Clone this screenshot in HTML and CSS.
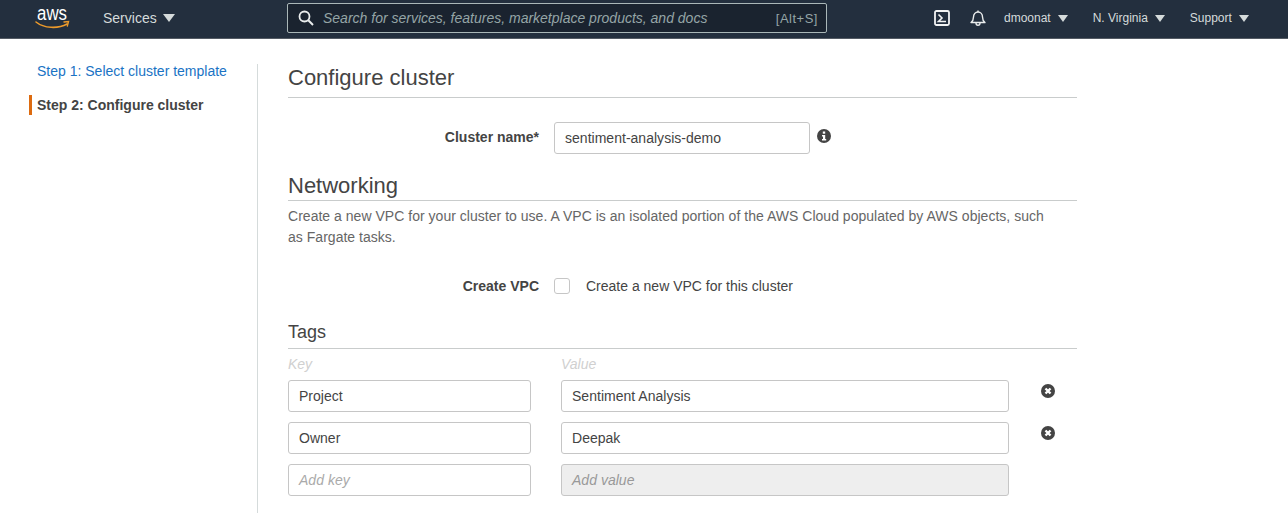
FILE: index.html
```html
<!DOCTYPE html>
<html lang="en">
<head>
<meta charset="utf-8">
<title>Configure cluster</title>
<link rel="stylesheet" href="styles.css">
</head>
<body>
<header class="topbar">
  <svg class="logo" width="42" height="28" viewBox="0 0 42 28">
    <text class="logo-text" x="2" y="16" textLength="30" lengthAdjust="spacingAndGlyphs">aws</text>
    <path d="M1 18C9 24.500 23 25 32 20" fill="none" stroke="#ec9a2b" stroke-width="1.600" stroke-linecap="round"/>
    <path d="M29 18L33.500 17.600L32.300 22" fill="none" stroke="#ec9a2b" stroke-width="1.400" stroke-linecap="round"/>
  </svg>
  <div class="nav-item services">Services <span class="caret caret-lg"></span></div>
  <div class="search">
    <svg width="16" height="16" viewBox="0 0 16 16"><circle cx="6.500" cy="6.500" r="5" fill="none" stroke="#eaeded" stroke-width="1.800"/><path d="M10.300 10.300L15 15" stroke="#eaeded" stroke-width="2"/></svg>
    <span class="search-text">Search for services, features, marketplace products, and docs</span>
    <span class="search-key">[Alt+S]</span>
  </div>
  <div class="right">
    <svg class="cloudshell" width="16" height="16" viewBox="0 0 16 16"><rect x="1" y="1" width="14" height="14" rx="1.500" fill="none" stroke="#f2f3f3" stroke-width="1.800"/><path d="M4.500 4.500L8 8L4.500 11.500H12" fill="none" stroke="#f2f3f3" stroke-width="1.600"/></svg>
    <svg class="bell" width="16" height="16" viewBox="0 0 16 16"><path d="M1 12.500C3 11 3.500 9.500 3.500 7C3.500 4 5.500 2 8 2C10.500 2 12.500 4 12.500 7C12.500 9.500 13 11 15 12.500Z" fill="none" stroke="#eaeded" stroke-width="1.400" stroke-linejoin="round"/><path d="M6 13C6 16 10 16 10 13" fill="none" stroke="#eaeded" stroke-width="1.400"/><path d="M8 0.500V2" stroke="#eaeded" stroke-width="1.400"/></svg>
    <div class="nav-item small user">dmoonat <span class="caret"></span></div>
    <div class="nav-item small region">N. Virginia <span class="caret"></span></div>
    <div class="nav-item small support">Support <span class="caret"></span></div>
  </div>
</header>
<div class="page">
  <nav class="side">
    <a class="step-link">Step 1: Select cluster template</a>
    <div class="step-current">Step 2: Configure cluster</div>
  </nav>
  <main class="main">
    <h1 class="title">Configure cluster</h1>
    <div class="name-row">
      <label class="label">Cluster name*</label>
      <div class="input name-input">sentiment-analysis-demo</div>
      <svg class="info" width="14" height="14" viewBox="0 0 14 14"><circle cx="7" cy="7" r="7" fill="#444"/><rect x="5.800" y="2.500" width="2.400" height="2.200" fill="#fff"/><path d="M5 6H8.200V10H9.200V11.500H5V10H6V7.500H5Z" fill="#fff"/></svg>
    </div>
    <h2 class="section net-title">Networking</h2>
    <p class="desc">Create a new VPC for your cluster to use. A VPC is an isolated portion of the AWS Cloud populated by AWS objects, such as Fargate tasks.</p>
    <div class="vpc-row">
      <label class="label">Create VPC</label>
      <span class="checkbox"></span>
      <span class="check-text">Create a new VPC for this cluster</span>
    </div>
    <h2 class="section-sm">Tags</h2>
    <div class="tags">
      <div class="col-head">Key</div>
      <div class="col-head">Value</div>
      <div></div>
      <div class="input">Project</div>
      <div class="input">Sentiment Analysis</div>
      <svg class="remove" width="14" height="14" viewBox="0 0 14 14"><circle cx="7" cy="7" r="7" fill="#444"/><path d="M4.500 4.500L9.500 9.500M9.500 4.500L4.500 9.500" stroke="#fff" stroke-width="2.400"/></svg>
      <div class="input">Owner</div>
      <div class="input">Deepak</div>
      <svg class="remove" width="14" height="14" viewBox="0 0 14 14"><circle cx="7" cy="7" r="7" fill="#444"/><path d="M4.500 4.500L9.500 9.500M9.500 4.500L4.500 9.500" stroke="#fff" stroke-width="2.400"/></svg>
      <div class="input placeholder">Add key</div>
      <div class="input placeholder disabled">Add value</div>
      <div></div>
    </div>
  </main>
</div>
</body>
</html>
```
FILE: styles.css
```css
* { box-sizing: border-box; }
html, body { margin: 0; height: 100%; overflow: hidden; }
body { font-family: "Liberation Sans", Arial, sans-serif; font-size: 14px; color: #444; background: #fff; }

.topbar { height: 39px; background: #232f3e; border-bottom: 1px solid #545b64; display: flex; align-items: center; color: #d5dbdb; padding: 0 0 2px 35px; }
.logo { flex: none; overflow: visible; }
.logo-text { font-family: "Liberation Sans", sans-serif; font-size: 20px; fill: #fff; }
.nav-item { white-space: nowrap; display: flex; align-items: center; }
.services { margin-left: 26px; font-size: 14px; gap: 6px; width: 184px; }
.small { font-size: 12px; gap: 7px; }
.caret { display: inline-block; width: 0; height: 0; border-left: 5.500px solid transparent; border-right: 5.500px solid transparent; border-top: 7px solid #d5dbdb; }
.caret-lg { border-left-width: 6px; border-right-width: 6px; border-top-width: 8px; }
.search { width: 540px; height: 30px; border: 1px solid #aab7b8; border-radius: 2px; background: #1a232f; display: flex; align-items: center; padding: 0 9px 0 10px; }
.search-text { margin-left: 9px; font-style: italic; color: #95a5a6; flex: 1; white-space: nowrap; }
.search-key { color: #95a5a6; font-size: 13px; margin-right: -1px; letter-spacing: 0.5px; }
.right { display: flex; align-items: center; margin-left: 107px; }
.bell { margin-left: 20px; }
.user { margin-left: 18px; }
.region { margin-left: 25px; }
.support { margin-left: 25px; }

.page { display: flex; align-items: flex-start; padding-top: 24px; }
.side { width: 258px; height: 450px; flex: none; border-right: 1px solid #d5dbdb; padding-left: 29px; margin-top: 1px; }
.step-link { display: block; padding-left: 8px; color: #1a73c4; line-height: 14px; }
.step-current { margin-top: 17px; border-left: 3px solid #dd6b10; padding-left: 5px; font-weight: bold; line-height: 20px; }

.main { width: 789px; margin-left: 30px; padding-top: 1px; }
.title { margin: 0; font-size: 22px; font-weight: 400; line-height: 28px; height: 34px; border-bottom: 1px solid #c9cccc; }
.name-row { display: flex; align-items: center; margin-top: 24px; }
.label { width: 251px; text-align: right; font-weight: bold; padding-bottom: 2px; }
.name-row .label, .vpc-row .label { flex: none; margin-right: 1px; }
.vpc-row .label { padding-bottom: 0; }
.name-input { width: 256px; margin-left: 14px; }
.input { height: 32px; border: 1px solid #c6c6c6; border-radius: 3px; padding: 0 10px; line-height: 30px; background: #fff; letter-spacing: 0.02px; }
.info { margin-left: 7px; margin-top: -4px; }
.section { margin: 19px 0 0; font-size: 22px; font-weight: 400; line-height: 25px; height: 28px; border-bottom: 1px solid #c9cccc; }
.desc { margin: 5px 0 0; width: 760px; line-height: 21px; color: #666; letter-spacing: 0.024px; }
.vpc-row { display: flex; align-items: center; margin-top: 28px; height: 20px; }
.checkbox { width: 16px; height: 16px; margin-left: 14px; border: 1px solid #c6c6c6; border-radius: 3px; flex: none; }
.check-text { margin-left: 16px; }
.section-sm { margin: 25px 0 0; font-size: 18px; font-weight: 400; line-height: 23px; border-bottom: 1px solid #c9cccc; height: 28px; }
.tags { display: grid; grid-template-columns: 243px 448px 1fr; column-gap: 30px; row-gap: 10px; align-items: start; margin-top: 6px; }
.col-head { font-style: italic; color: #d0d0d0; height: 15px; line-height: 18px; }
.remove { justify-self: start; margin: 4px 0 0 2px; }
.placeholder { font-style: italic; color: #aaa; }
.disabled { background: #eee; color: #999; }
```
